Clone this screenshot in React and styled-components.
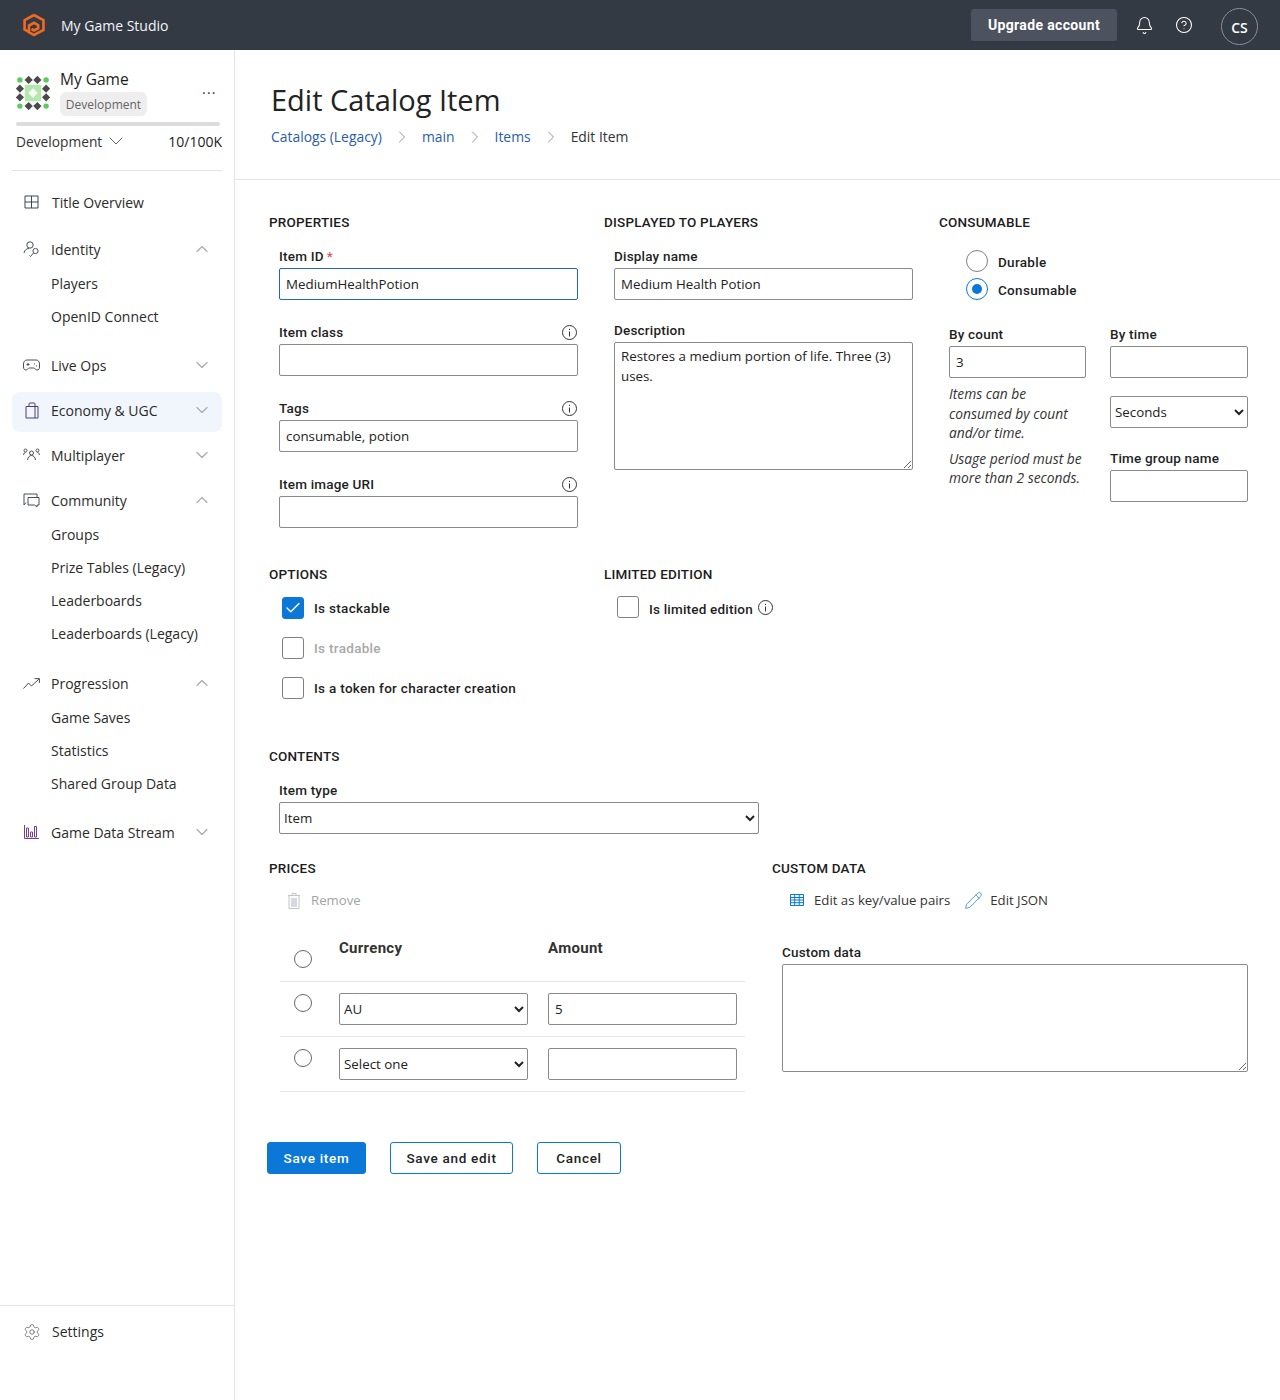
import React from "react";
import styled, { createGlobalStyle } from "styled-components";
import { Bell, CircleHelp, ChevronDown, ChevronUp, ChevronRight, Settings, Pencil, Check } from "lucide-react";

const labelFont = `Roboto, "Liberation Sans", sans-serif`;

const GlobalStyle = createGlobalStyle`
  html, body { margin: 0; padding: 0; }
  body {
    background: #fff;
    color: #222;
    font-family: "Open Sans", "Liberation Sans", sans-serif;
    font-size: 14px;
  }
  * { box-sizing: border-box; }
`;

const Page = styled.div`
  display: flex;
  flex-direction: column;
  min-height: 1400px;
`;

const TopBar = styled.header`
  height: 50px;
  background: #333a44;
  color: #fff;
  display: flex;
  align-items: center;
  padding: 0 22px;
`;

const Brand = styled.div`
  margin-left: 15px;
  font-size: 14px;
  font-weight: 500;
  color: #f3f5f7;
`;

const TopActions = styled.div`
  margin-left: auto;
  display: flex;
  align-items: center;
`;

const UpgradeButton = styled.button`
  width: 146px;
  height: 32px;
  border: 0;
  border-radius: 3px;
  background: #4c525e;
  color: #fff;
  font-family: ${labelFont};
  font-size: 14px;
  font-weight: 700;
  letter-spacing: 0.35px;
`;

const TopIcon = styled.span`
  display: flex;
  margin-left: ${(p) => p.$left}px;
  color: #fff;
`;

const Avatar = styled.div`
  width: 37px;
  height: 37px;
  margin-left: 28px;
  margin-top: 3px;
  border: 1px solid #8a8f97;
  border-radius: 50%;
  display: flex;
  align-items: center;
  justify-content: center;
  font-size: 14px;
  font-weight: 600;
  padding-top: 2px;
`;

const Body = styled.div`
  flex: 1;
  display: flex;
`;

const Sidebar = styled.aside`
  width: 235px;
  flex: none;
  border-right: 1px solid #e3e3e3;
  display: flex;
  flex-direction: column;
`;

const GameCard = styled.div`
  position: relative;
  padding: 20px 12px 0 16px;
  height: 120px;
`;

const GameHead = styled.div`
  display: flex;
  gap: 10px;
`;

const GameIcon = styled.svg`
  width: 34px;
  height: 34px;
  margin-top: 6px;
  flex: none;
`;

const GameName = styled.div`
  font-size: 15.5px;
  line-height: 20px;
  margin-top: -1px;
  font-weight: 500;
  color: #1c1c1c;
`;

const Badge = styled.div`
  margin-top: 3px;
  height: 24px;
  width: 87px;
  background: #eeeeee;
  border-radius: 6px;
  font-size: 12px;
  line-height: 25px;
  text-align: center;
  color: #666;
`;

const MoreDots = styled.div`
  position: absolute;
  left: 202px;
  top: 32px;
  font-size: 14px;
  letter-spacing: 1.2px;
  line-height: 14px;
  color: #333;
`;

const Progress = styled.div`
  height: 4px;
  width: 204px;
  margin-top: 6px;
  background: #dcdcdc;
  border-radius: 2px;
`;

const EnvRow = styled.div`
  display: flex;
  align-items: center;
  margin-top: 5px;
  height: 20px;
  color: #333;
`;

const EnvName = styled.span`
  font-size: 13.75px;
  font-weight: 500;
  margin-right: 2px;
`;

const Usage = styled.span`
  margin-left: auto;
  color: #222;
`;

const Nav = styled.nav`
  margin: 0 12px;
  padding-top: 11px;
  border-top: 1px solid #e3e3e3;
`;

const NavRow = styled.div`
  height: 40px;
  display: flex;
  align-items: center;
  padding: ${(p) => (p.$active ? "0 10px 4px" : "0 10px")};
  margin-bottom: ${(p) => p.$after ?? 5}px;
  border-radius: 8px;
  background: ${(p) => (p.$active ? "#f1f6fd" : "transparent")};
  color: #2b2b2b;
`;

const NavIcon = styled.span`
  width: 19px;
  height: 19px;
  margin-right: ${(p) => p.$gap ?? 10}px;
  display: flex;
  align-items: center;
  justify-content: center;
  flex: none;
`;

const NavChevron = styled.span`
  margin-left: auto;
  display: flex;
  color: #a9a9a9;
`;

const SubList = styled.div`
  margin-top: -7px;
  margin-bottom: ${(p) => p.$after ?? 12}px;
`;

const SubItem = styled.div`
  height: 33px;
  line-height: 33px;
  padding-left: 39px;
  color: #2b2b2b;
`;

const SidebarFooter = styled.div`
  margin-top: auto;
  height: 95px;
  border-top: 1px solid #e3e3e3;
  display: flex;
  align-items: flex-start;
  padding: 16px 0 0 23px;
  color: #2b2b2b;
`;

const FooterIcon = styled.span`
  display: flex;
  margin-right: 11px;
  color: #555;
  height: 20px;
  align-items: center;
`;

const Main = styled.main`
  flex: 1;
  min-width: 0;
`;

const PageHeader = styled.div`
  padding: 30px 0 32px 36px;
  border-bottom: 1px solid #e3e3e3;
`;

const Title = styled.h1`
  margin: 0;
  font-size: 29px;
  line-height: 40px;
  font-weight: 400;
  color: #222;
`;

const Breadcrumbs = styled.div`
  margin-top: 7px;
  display: flex;
  align-items: center;
  gap: 10px;
  line-height: 20px;
  font-size: 13.9px;
`;

const Crumb = styled.span`
  color: ${(p) => (p.$current ? "#333" : "#2a5ea8")};
`;

const CrumbSep = styled.span`
  display: flex;
  color: #8a8a8a;
`;

const Form = styled.div`
  padding: 34px 32px 0 34px;
`;

const TopColumns = styled.div`
  display: grid;
  grid-template-columns: 335px 335px 309px;
`;

const MidColumns = styled.div`
  display: grid;
  grid-template-columns: 335px 335px;
  margin-top: 38px;
`;

const PriceColumns = styled.div`
  display: grid;
  grid-template-columns: 503px 476px;
  margin-top: 26px;
`;

const SectionTitle = styled.h2`
  margin: 0 0 16px;
  font-family: ${labelFont};
  font-size: 13.5px;
  line-height: 16px;
  font-weight: 500;
  letter-spacing: 0.2px;
  color: #1c1c1c;
`;

const Field = styled.div`
  width: ${(p) => p.$width ?? 309}px;
  padding-left: ${(p) => p.$inset ?? 10}px;
  margin-bottom: ${(p) => p.$after ?? 22}px;
`;

const LabelRow = styled.div`
  display: flex;
  align-items: center;
  justify-content: space-between;
  height: 20px;
  margin-bottom: 2px;
  padding-right: 1px;
`;

const Label = styled.label`
  font-family: ${labelFont};
  font-size: 13.5px;
  font-weight: 500;
  letter-spacing: 0.2px;
  color: #1f1f1f;
`;

const Required = styled.span`
  color: #d6585c;
  margin-left: 3px;
`;

const TextInput = styled.input`
  display: block;
  width: 100%;
  height: 32px;
  padding: 0 6px;
  border: 1px solid ${(p) => (p.$focus ? "#2368b3" : "#8a8a8a")};
  border-radius: 2px;
  background: #fff;
  font: 13.33px "Open Sans", sans-serif;
  color: #222;
`;

const TextArea = styled.textarea`
  display: block;
  width: 100%;
  height: ${(p) => p.$height}px;
  padding: 3px 6px;
  border: 1px solid #8a8a8a;
  border-radius: 2px;
  font: 13.33px/20px "Open Sans", sans-serif;
  color: #222;
`;

const Select = styled.select`
  display: block;
  width: 100%;
  height: 32px;
  padding: 0;
  border: 1px solid #8a8a8a;
  border-radius: 2px;
  background: #fff;
  font: 13.33px "Open Sans", sans-serif;
  color: #222;
`;

const RadioGroup = styled.div`
  padding-left: 27px;
  margin-top: 20px;
  display: flex;
  flex-direction: column;
  gap: 6px;
`;

const RadioRow = styled.div`
  display: flex;
  align-items: center;
  gap: 10px;
  height: 22px;
`;

const RadioMark = styled.span`
  width: 22px;
  height: 22px;
  border-radius: 50%;
  border: 1px solid ${(p) => (p.$on ? "#0b78d8" : "#7d7f8a")};
  display: flex;
  align-items: center;
  justify-content: center;
  flex: none;
  &::after {
    content: "";
    display: ${(p) => (p.$on ? "block" : "none")};
    width: 10px;
    height: 10px;
    border-radius: 50%;
    background: #0b78d8;
  }
`;

const OptionText = styled.span`
  font-family: ${labelFont};
  font-size: 13.5px;
  font-weight: 500;
  letter-spacing: 0.3px;
  color: ${(p) => (p.$muted ? "#a8a8a8" : "#1f1f1f")};
`;

const RadioText = styled(OptionText)`
  padding-top: 2px;
`;

const CountGrid = styled.div`
  margin-top: 24px;
  padding-left: 10px;
  display: grid;
  grid-template-columns: 137px 138px;
  column-gap: 24px;
`;

const Note = styled.p`
  margin: 6px 0 0;
  font-size: 13.8px;
  font-style: italic;
  line-height: 19.6px;
  color: #333;
`;

const Spaced = styled.div`
  margin-top: ${(p) => p.$top}px;
`;

const CheckList = styled.div`
  margin-top: ${(p) => p.$top}px;
`;

const CheckRow = styled.div`
  display: flex;
  align-items: center;
  height: 22px;
  gap: 10px;
  margin-left: 13px;
  margin-bottom: 18px;
`;

const CheckBox = styled.span`
  width: 22px;
  height: 22px;
  border-radius: 3px;
  border: 1px solid ${(p) => (p.$on ? "#0b78d8" : "#7d7f8a")};
  background: ${(p) => (p.$on ? "#0b78d8" : "#fff")};
  color: #fff;
  display: flex;
  align-items: center;
  justify-content: center;
  flex: none;
`;

const LimitedText = styled(OptionText)`
  margin-top: 3px;
  margin-right: -5px;
  letter-spacing: 0.2px;
`;

const ContentsBlock = styled.div`
  margin-top: 31px;
`;

const ActionBar = styled.div`
  display: flex;
  align-items: center;
  height: 20px;
  margin-top: -3px;
  padding-top: 2px;
  padding-left: ${(p) => p.$left}px;
  font-size: 13.2px;
`;

const Action = styled.span`
  display: flex;
  align-items: center;
  gap: ${(p) => p.$gap}px;
  margin-right: ${(p) => p.$after ?? 0}px;
  color: ${(p) => (p.$muted ? "#a3a3a3" : "#333")};
`;

const PriceTable = styled.div`
  margin-left: 11px;
  width: 465px;
  margin-top: 21px;
`;

const PriceRow = styled.div`
  display: grid;
  grid-template-columns: 59px 209px 189px;
  height: ${(p) => p.$height}px;
  padding-top: 11px;
  border-bottom: 1px solid #e6e6e6;
`;

const PriceHeader = styled.div`
  font-family: ${labelFont};
  font-size: 15px;
  font-weight: 700;
  letter-spacing: 0.3px;
  line-height: 20px;
  color: #333;
  margin-top: -3px;
`;

const SmallRadio = styled.span`
  display: block;
  width: 18px;
  height: 18px;
  margin-left: 14px;
  margin-top: ${(p) => p.$top}px;
  border: 1px solid #666;
  border-radius: 50%;
`;

const CellField = styled.div`
  width: 189px;
`;

const CustomField = styled.div`
  padding-left: 10px;
  margin-top: 33px;
`;

const ButtonBar = styled.div`
  display: flex;
  gap: 24px;
  margin: 50px 0 0 -2px;
`;

const Button = styled.button`
  height: 32px;
  padding: 0;
  width: ${(p) => p.$width}px;
  border: 1px solid #0b78d8;
  border-radius: 3px;
  background: ${(p) => (p.$primary ? "#0b78d8" : "#fff")};
  color: ${(p) => (p.$primary ? "#fff" : "#222")};
  font-family: ${labelFont};
  font-size: 13.5px;
  font-weight: 500;
  letter-spacing: 0.7px;
`;

const Stroke = styled.svg`
  fill: none;
  stroke: ${(p) => p.$color ?? "#4a4f5c"};
  stroke-width: 1;
  display: block;
`;

const Logo = () => (
  <svg width="24" height="24" viewBox="0 0 24 24" fill="none" stroke="#f26a21" strokeWidth="2.6">
    <path d="M12 2 21.500 7.200V17L12 22 7 19.300V12.500L12 9.800 16.200 12.200V15.200L12 17.400 9.500 16" />
    <path d="M7 19 2.600 16.600V7.200L12 2" />
  </svg>
);

const cornerDots = [[4, 4], [31, 4], [4, 31], [31, 31]];
const gameDiamonds = [
  [13, 4], [22, 4], [13, 31], [22, 31], [4, 13], [4, 22], [31, 13], [31, 22],
];

const GameLogo = () => (
  <GameIcon viewBox="0 0 35 35">
    {gameDiamonds.map(([x, y]) => (
      <rect key={`${x}-${y}`} x={x - 3} y={y - 3} width="6" height="6" fill="#4a4a4a" transform={`rotate(45 ${x} ${y})`} />
    ))}
    {cornerDots.map(([x, y]) => (
      <circle key={`${x}-${y}`} cx={x} cy={y} r="2.800" fill="#5ecb5e" />
    ))}
    <rect x="9" y="9" width="17" height="17" fill="#b6e6b0" />
    <rect x="14" y="14" width="7" height="7" fill="#f4fcf2" transform="rotate(45 17.500 17.500)" />
  </GameIcon>
);

const OverviewIcon = () => (
  <Stroke width="15" height="14" viewBox="0 0 15 14" $color="#3d4657">
    <path d="M1 1h13v12H1zM7.500 1v12M1 7h13" />
  </Stroke>
);

const IdentityIcon = () => (
  <Stroke width="17" height="17" viewBox="0 0 17 17">
    <circle cx="7" cy="4" r="3.200" />
    <path d="M1 12c.5-3 2.500-4.500 5-4.500" />
    <circle cx="12.500" cy="10" r="2.600" />
    <path d="M10.500 12 7.500 15.500l-1-1" />
  </Stroke>
);

const GamepadIcon = () => (
  <Stroke width="17" height="12" viewBox="0 0 17 12">
    <path d="M4 1h9c2 0 3.500 1.500 3.500 4v3c0 2-1 3-2.500 3-1.500 0-2-2-3.500-2h-4C5 9 4.500 11 3 11 1.500 11 .5 10 .5 8V5C.5 2.500 2 1 4 1z" />
    <path d="M3.500 5.500h3M5 4v3M11 5h1M13 7h1" />
  </Stroke>
);

const BagIcon = () => (
  <Stroke width="14" height="17" viewBox="0 0 14 17" $color="#4b3f72">
    <path d="M1 4.500h12V16H1zM4 4.500V2c0-.6.4-1 1-1h4c.6 0 1 .4 1 1v2.500M10 4.500V16" />
  </Stroke>
);

const PeopleIcon = () => (
  <Stroke width="17" height="14" viewBox="0 0 17 14">
    <circle cx="8.500" cy="5" r="2" />
    <circle cx="2.500" cy="2.500" r="1.500" />
    <circle cx="14.500" cy="2.500" r="1.500" />
    <path d="M4.500 12c.5-3 2-4.500 4-4.500s3.500 1.500 4 4.500M.5 7c.3-1.500 1-2.500 2-2.500M16.500 7c-.3-1.500-1-2.500-2-2.500" />
  </Stroke>
);

const ChatIcon = () => (
  <Stroke width="17" height="15" viewBox="0 0 17 15">
    <path d="M3 9.500 1 12V1h13v3" />
    <path d="M5 4.500h11V12h-2v2l-2.500-2H5z" />
  </Stroke>
);

const TrendIcon = () => (
  <Stroke width="17" height="11" viewBox="0 0 17 11">
    <path d="M.5 10.500 5.500 5l3 3L16 1M11.500.6H16.400V5" />
  </Stroke>
);

const BarsIcon = () => (
  <Stroke width="15" height="14" viewBox="0 0 15 14" $color="#7a3f8f">
    <path d="M.5 0v13.500H15M2.500 3h2v9h-2zM6.500 7h2v5h-2zM10.500 1.500h2V12h-2z" />
  </Stroke>
);

const InfoIcon = () => (
  <Stroke width="15" height="15" viewBox="0 0 15 15" $color="#333">
    <circle cx="7.500" cy="7.500" r="7" />
    <path d="M7.500 6.500v5M7.500 3.800v1.200" />
  </Stroke>
);

const TableIcon = () => (
  <Stroke width="14" height="12" viewBox="0 0 14 12" $color="#0b78d8">
    <path d="M.5.500h13v11H.5zM.5 3.500h13M.5 6h13M.5 8.700h13M4.700.5v11M9.200.5v11" />
  </Stroke>
);

const RemoveIcon = () => (
  <svg width="14" height="17" viewBox="0 0 14 17" fill="none" stroke="#c4c4c4" display="block">
    <path d="M1 3.500h12M5 3.500V1.500h4v2M2 3.500v13h10v-13" />
    <rect x="4" y="6" width="6" height="9" fill="#d4d9e2" stroke="none" />
  </svg>
);

const NavItem = ({ icon, label, open, active, after, gap }) => (
  <NavRow $active={active} $after={after}>
    <NavIcon $gap={gap}>{icon}</NavIcon>
    {label}
    {open !== undefined && (
      <NavChevron>{open ? <ChevronUp size={20} strokeWidth={1.4} /> : <ChevronDown size={20} strokeWidth={1.4} />}</NavChevron>
    )}
  </NavRow>
);

const FormField = ({ label, required, info, value, focus, after, inset }) => (
  <Field $after={after} $inset={inset}>
    <LabelRow>
      <Label>
        {label}
        {required && <Required>*</Required>}
      </Label>
      {info && <InfoIcon />}
    </LabelRow>
    <TextInput $focus={focus} defaultValue={value} />
  </Field>
);

const SmallField = ({ label, value }) => (
  <div>
    <LabelRow>
      <Label>{label}</Label>
    </LabelRow>
    <TextInput defaultValue={value} />
  </div>
);

const crumbs = ["Catalogs (Legacy)", "main", "Items"];

const App = () => (
  <Page>
    <GlobalStyle />
    <TopBar>
      <Logo />
      <Brand>My Game Studio</Brand>
      <TopActions>
        <UpgradeButton>Upgrade account</UpgradeButton>
        <TopIcon $left={18}><Bell size={19} strokeWidth={1.3} /></TopIcon>
        <TopIcon $left={21}><CircleHelp size={18} strokeWidth={1.4} /></TopIcon>
        <Avatar>CS</Avatar>
      </TopActions>
    </TopBar>
    <Body>
      <Sidebar>
        <GameCard>
          <GameHead>
            <GameLogo />
            <div>
              <GameName>My Game</GameName>
              <Badge>Development</Badge>
            </div>
          </GameHead>
          <MoreDots>...</MoreDots>
          <Progress />
          <EnvRow>
            <EnvName>Development</EnvName>
            <ChevronDown size={24} strokeWidth={0.9} color="#555" />
            <Usage>10/100K</Usage>
          </EnvRow>
        </GameCard>
        <Nav>
          <NavItem icon={<OverviewIcon />} label="Title Overview" after={7} gap={11} />
          <NavItem icon={<IdentityIcon />} label="Identity" open />
          <SubList>
            <SubItem>Players</SubItem>
            <SubItem>OpenID Connect</SubItem>
          </SubList>
          <NavItem icon={<GamepadIcon />} label="Live Ops" open={false} after={7} />
          <NavItem icon={<BagIcon />} label="Economy & UGC" open={false} active after={3} />
          <NavItem icon={<PeopleIcon />} label="Multiplayer" open={false} />
          <NavItem icon={<ChatIcon />} label="Community" open />
          <SubList $after={13}>
            <SubItem>Groups</SubItem>
            <SubItem>Prize Tables (Legacy)</SubItem>
            <SubItem>Leaderboards</SubItem>
            <SubItem>Leaderboards (Legacy)</SubItem>
          </SubList>
          <NavItem icon={<TrendIcon />} label="Progression" open />
          <SubList>
            <SubItem>Game Saves</SubItem>
            <SubItem>Statistics</SubItem>
            <SubItem>Shared Group Data</SubItem>
          </SubList>
          <NavItem icon={<BarsIcon />} label="Game Data Stream" open={false} />
        </Nav>
        <SidebarFooter>
          <FooterIcon><Settings size={18} strokeWidth={1} /></FooterIcon>
          Settings
        </SidebarFooter>
      </Sidebar>
      <Main>
        <PageHeader>
          <Title>Edit Catalog Item</Title>
          <Breadcrumbs>
            {crumbs.map((crumb) => (
              <React.Fragment key={crumb}>
                <Crumb>{crumb}</Crumb>
                <CrumbSep><ChevronRight size={20} strokeWidth={1.1} /></CrumbSep>
              </React.Fragment>
            ))}
            <Crumb $current>Edit Item</Crumb>
          </Breadcrumbs>
        </PageHeader>
        <Form>
          <TopColumns>
            <div>
              <SectionTitle>PROPERTIES</SectionTitle>
              <FormField label="Item ID" required focus value="MediumHealthPotion" />
              <FormField label="Item class" info />
              <FormField label="Tags" info value="consumable, potion" />
              <FormField label="Item image URI" info after={0} />
            </div>
            <div>
              <SectionTitle>DISPLAYED TO PLAYERS</SectionTitle>
              <FormField label="Display name" value="Medium Health Potion" after={20} />
              <Field $after={0}>
                <LabelRow><Label>Description</Label></LabelRow>
                <TextArea $height={128} defaultValue="Restores a medium portion of life. Three (3) uses." />
              </Field>
            </div>
            <div>
              <SectionTitle>CONSUMABLE</SectionTitle>
              <RadioGroup>
                <RadioRow><RadioMark /><RadioText>Durable</RadioText></RadioRow>
                <RadioRow><RadioMark $on /><RadioText>Consumable</RadioText></RadioRow>
              </RadioGroup>
              <CountGrid>
                <div>
                  <SmallField label="By count" value="3" />
                  <Note>Items can be consumed by count and/or time.</Note>
                  <Note>Usage period must be more than 2 seconds.</Note>
                </div>
                <div>
                  <SmallField label="By time" />
                  <Spaced $top={18}>
                    <Select defaultValue="Seconds"><option>Seconds</option></Select>
                  </Spaced>
                  <Spaced $top={20}>
                    <SmallField label="Time group name" />
                  </Spaced>
                </div>
              </CountGrid>
            </div>
          </TopColumns>
          <MidColumns>
            <div>
              <SectionTitle>OPTIONS</SectionTitle>
              <CheckList $top={-1}>
                <CheckRow>
                  <CheckBox $on><Check size={18} strokeWidth={1.8} /></CheckBox>
                  <OptionText>Is stackable</OptionText>
                </CheckRow>
                <CheckRow>
                  <CheckBox />
                  <OptionText $muted>Is tradable</OptionText>
                </CheckRow>
                <CheckRow>
                  <CheckBox />
                  <OptionText>Is a token for character creation</OptionText>
                </CheckRow>
              </CheckList>
            </div>
            <div>
              <SectionTitle>LIMITED EDITION</SectionTitle>
              <CheckList $top={-2}>
                <CheckRow>
                  <CheckBox />
                  <LimitedText>Is limited edition</LimitedText>
                  <InfoIcon />
                </CheckRow>
              </CheckList>
            </div>
          </MidColumns>
          <ContentsBlock>
            <SectionTitle>CONTENTS</SectionTitle>
            <Field $width={490} $after={0}>
              <LabelRow><Label>Item type</Label></LabelRow>
              <Select defaultValue="Item"><option>Item</option></Select>
            </Field>
          </ContentsBlock>
          <PriceColumns>
            <div>
              <SectionTitle>PRICES</SectionTitle>
              <ActionBar $left={18}>
                <Action $muted $gap={10}><RemoveIcon />Remove</Action>
              </ActionBar>
              <PriceTable>
                <PriceRow $height={52}>
                  <SmallRadio $top={9} />
                  <PriceHeader>Currency</PriceHeader>
                  <PriceHeader>Amount</PriceHeader>
                </PriceRow>
                <PriceRow $height={55}>
                  <SmallRadio $top={1} />
                  <CellField><Select defaultValue="AU"><option>AU</option></Select></CellField>
                  <CellField><TextInput defaultValue="5" /></CellField>
                </PriceRow>
                <PriceRow $height={55}>
                  <SmallRadio $top={1} />
                  <CellField><Select defaultValue="Select one"><option>Select one</option></Select></CellField>
                  <CellField><TextInput /></CellField>
                </PriceRow>
              </PriceTable>
            </div>
            <div>
              <SectionTitle>CUSTOM DATA</SectionTitle>
              <ActionBar $left={18}>
                <Action $gap={10} $after={14}><TableIcon />Edit as key/value pairs</Action>
                <Action $gap={7}><Pencil size={19} strokeWidth={0.9} color="#0b78d8" />Edit JSON</Action>
              </ActionBar>
              <CustomField>
                <LabelRow><Label>Custom data</Label></LabelRow>
                <TextArea $height={108} />
              </CustomField>
            </div>
          </PriceColumns>
          <ButtonBar>
            <Button $primary $width={99}>Save item</Button>
            <Button $width={123}>Save and edit</Button>
            <Button $width={84}>Cancel</Button>
          </ButtonBar>
        </Form>
      </Main>
    </Body>
  </Page>
);

export default App;
